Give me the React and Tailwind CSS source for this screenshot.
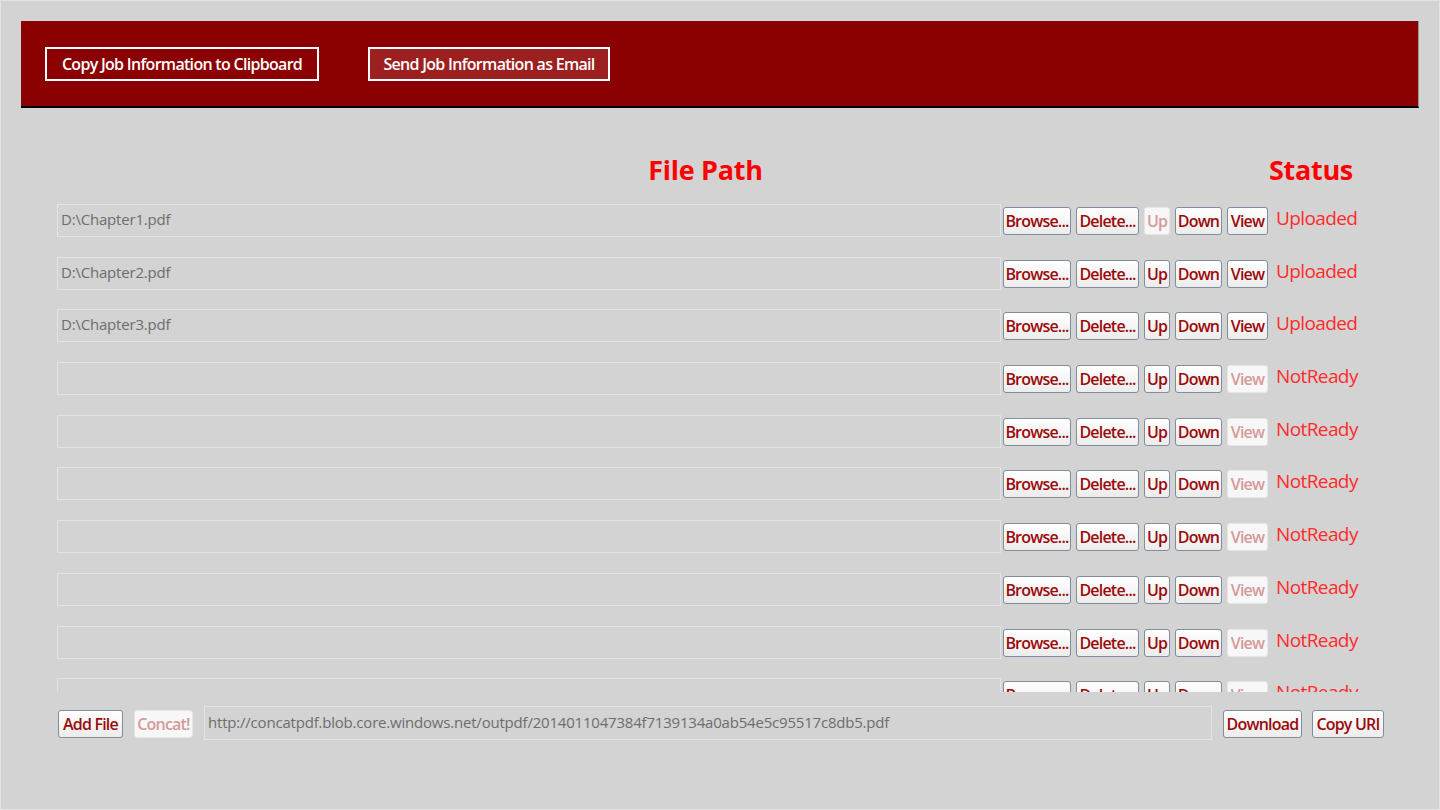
import React from 'react';

const font = { fontFamily: '"Open Sans", "Noto Sans", sans-serif' };

const files = [
  { path: 'D:\\Chapter1.pdf', status: 'Uploaded', up: false, view: true },
  { path: 'D:\\Chapter2.pdf', status: 'Uploaded', up: true, view: true },
  { path: 'D:\\Chapter3.pdf', status: 'Uploaded', up: true, view: true },
  { path: '', status: 'NotReady', up: true, view: false },
  { path: '', status: 'NotReady', up: true, view: false },
  { path: '', status: 'NotReady', up: true, view: false },
  { path: '', status: 'NotReady', up: true, view: false },
  { path: '', status: 'NotReady', up: true, view: false },
  { path: '', status: 'NotReady', up: true, view: false },
  { path: '', status: 'NotReady', up: true, view: false },
];

const Btn = ({ children, disabled, className = '' }) => (
  <button
    className={`h-[28px] shrink-0 whitespace-nowrap rounded-[3px] border px-0 text-[16px] font-semibold leading-none tracking-[-0.8px] ${
      disabled
        ? 'border-[#e6e6e6] bg-[#f7f7f7] text-[#d49a9a]'
        : 'border-[#7f8d9c] bg-gradient-to-b from-white to-[#ececec] text-[#9b0a0a]'
    } ${className}`}
  >
    {children}
  </button>
);

const FileRow = ({ item }) => (
  <div className="flex h-[33px] shrink-0 items-start">
    <div className="h-[33px] w-[944px] shrink-0 border border-[#e3e3e3] pl-[3px] pt-[3px] text-[15px] tracking-[-0.2px] text-[#6d6d6d]">
      {item.path}
    </div>
    <div className="ml-[2px] mt-[3px] flex gap-[5px]">
      <Btn className="w-[68px]">Browse...</Btn>
      <Btn className="w-[63px]">Delete...</Btn>
      <Btn className="w-[26px]" disabled={!item.up}>Up</Btn>
      <Btn className="w-[47px]">Down</Btn>
      <Btn className="w-[41px]" disabled={!item.view}>View</Btn>
    </div>
    <div className="ml-[8px] text-[19px] leading-[28px] tracking-[-0.6px] text-[#ff2b2b]">{item.status}</div>
  </div>
);

export default function App() {
  return (
    <div className="h-[810px] w-[1440px] overflow-hidden border border-[#e4e4e4] bg-[#d3d3d3]" style={font}>
      <div className="ml-[20px] mr-[20px] mt-[20px] flex h-[87px] items-start gap-[49px] border-b-[2px] border-r border-b-black border-r-[#9a9a9a] bg-[#8b0000] pl-[24px] pt-[26px]">
        <button className="h-[34px] w-[274px] border-2 border-white text-[16px] font-semibold tracking-[-0.7px] text-white">
          Copy Job Information to Clipboard
        </button>
        <button className="h-[34px] w-[242px] border-2 border-white bg-[#9c2020] text-[16px] font-semibold tracking-[-0.7px] text-white">
          Send Job Information as Email
        </button>
      </div>

      <div className="ml-[56px] mt-[45px] flex items-end">
        <div className="w-[1297px] text-center text-[27px] font-bold leading-[34px] tracking-[-0.3px] text-[#ff0000]">File Path</div>
      </div>
      <div className="-mt-[34px] flex justify-end pr-[86px] text-[27px] font-bold leading-[34px] tracking-[-0.3px] text-[#ff0000]">Status</div>

      <div className="ml-[56px] mt-[17px] flex h-[488px] flex-col gap-[19.7px] overflow-hidden">
        {files.map((item, i) => (
          <FileRow key={i} item={item} />
        ))}
      </div>

      <div className="ml-[57px] mt-[14px] flex items-start">
        <Btn className="mt-[4px] w-[65px]">Add File</Btn>
        <Btn className="ml-[11px] mt-[4px] w-[59px]" disabled>Concat!</Btn>
        <div className="ml-[11px] h-[34px] w-[1008px] border border-[#e3e3e3] pl-[3px] pt-[4px] text-[15px] tracking-[-0.2px] text-[#6d6d6d]">
          http://concatpdf.blob.core.windows.net/outpdf/2014011047384f7139134a0ab54e5c95517c8db5.pdf
        </div>
        <Btn className="ml-[11px] mt-[4px] w-[79px]">Download</Btn>
        <Btn className="ml-[10px] mt-[4px] w-[72px]">Copy URI</Btn>
      </div>
    </div>
  );
}
